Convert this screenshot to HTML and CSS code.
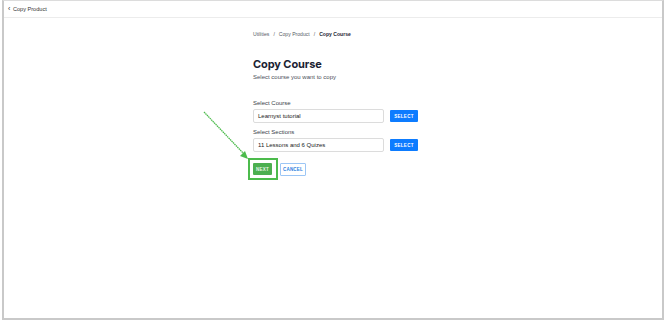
FILE: index.html
```html
<!DOCTYPE html>
<html lang="en">
  <head>
    <meta charset="UTF-8" />
    <title>Copy Course</title>
    <link rel="stylesheet" href="styles.css">
  </head>
  <body>
    <div class="frame">
      <div class="topbar">
        <span class="back">&lsaquo;</span> Copy Product
      </div>

      <div class="content">
        <div class="crumbs">
          <span>Utilities</span>
          <span class="sep">/</span>
          <span>Copy Product</span>
          <span class="sep">/</span>
          <span class="current">Copy Course</span>
        </div>

        <h1>Copy Course</h1>
        <p class="sub">Select course you want to copy</p>

        <div class="field">
          <label>Select Course</label>
          <div class="row">
            <div class="input">Learnyst tutorial</div>
            <button class="btn-select">SELECT</button>
          </div>
        </div>

        <div class="field">
          <label>Select Sections</label>
          <div class="row">
            <div class="input">11 Lessons and 6 Quizes</div>
            <button class="btn-select">SELECT</button>
          </div>
        </div>

        <div class="actions">
          <div class="highlight">
            <button class="btn-next">NEXT</button>
          </div>
          <button class="btn-cancel">CANCEL</button>
        </div>
      </div>

      <svg class="arrow" width="60" height="60" viewBox="0 0 60 60">
        <line x1="2" y1="2" x2="42" y2="44" stroke="#4cbb4c" stroke-width="1.3" stroke-dasharray="1.5 0.6" />
        <polygon points="46,49 38,46 43,41" fill="#4cbb4c" />
      </svg>
    </div>
  </body>
</html>
```

FILE: styles.css
```css
body {
  margin: 0;
  background: #ffffff;
  font-family: "Liberation Sans", Arial, sans-serif;
  color: #1e2433;
}

.frame {
  position: relative;
  margin: 0 6px 0 2px;
  height: 317px;
  border: 2px solid #c9c9c9;
  border-top: 1px solid #dcdcdc;
  box-sizing: content-box;
}

.topbar {
  height: 16px;
  line-height: 16px;
  padding-left: 4px;
  font-size: 5.6px;
  color: #333;
  border-bottom: 1px solid #ececec;
}

.back {
  font-size: 7px;
  margin-right: 1px;
}

.content {
  width: 170px;
  margin-left: 249px;
  padding-top: 13px;
}

.crumbs {
  font-size: 5.1px;
  color: #555b66;
  display: flex;
  gap: 4px;
  height: 8px;
}

.crumbs .current {
  color: #1e2433;
  font-weight: bold;
}

h1 {
  font-family: Inter, "Liberation Sans", sans-serif;
  font-size: 11px;
  font-weight: 700;
  margin: 18px 0 0;
  color: #1b2232;
  letter-spacing: -0.1px;
}

.sub {
  font-size: 6px;
  color: #4a4f5a;
  margin: 3px 0 0;
}

.field {
  margin-top: 20px;
}

.field + .field {
  margin-top: 6px;
}

.field label {
  display: block;
  font-size: 6px;
  color: #3a3f4a;
  margin-bottom: 3px;
}

.row {
  display: flex;
  gap: 6px;
  align-items: center;
}

.input {
  width: 125px;
  height: 12px;
  line-height: 12px;
  padding-left: 4px;
  border: 1px solid #dcdcdc;
  border-radius: 2px;
  font-size: 6px;
  color: #222;
}

.btn-select {
  width: 28px;
  height: 12px;
  padding: 0;
  border: none;
  border-radius: 1px;
  background: #0d7cff;
  color: #ffffff;
  font-family: "Liberation Sans", Arial, sans-serif;
  font-size: 4.5px;
  font-weight: bold;
  letter-spacing: 0.3px;
}

.actions {
  display: flex;
  align-items: center;
  gap: 2px;
  margin-top: 6px;
  margin-left: -5px;
}

.highlight {
  border: 2px solid #4cbb4c;
  padding: 3px 4px 3px 3px;
}

.btn-next,
.btn-cancel {
  height: 12px;
  padding: 0;
  font-family: "Liberation Sans", Arial, sans-serif;
  font-size: 4.5px;
  font-weight: bold;
  border-radius: 1px;
  letter-spacing: 0.2px;
}

.btn-next {
  display: block;
  width: 19px;
  border: none;
  background: #4caf50;
  color: #e8f5e8;
}

.btn-cancel {
  width: 26px;
  height: 13px;
  background: #ffffff;
  border: 1px solid #9cc6f5;
  color: #2a7fe0;
}

.arrow {
  position: absolute;
  left: 198px;
  top: 109px;
}
```
